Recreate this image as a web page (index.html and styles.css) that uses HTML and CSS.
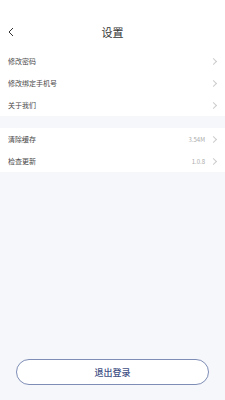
FILE: index.html
```html
<!DOCTYPE html>
<html lang="zh">

<head>
    <meta charset="UTF-8">
    <meta name="viewport" content="width=device-width, initial-scale=1.0">
    <title>设置</title>
    <link rel="stylesheet" href="styles.css">
</head>

<body>
    <div class="cabecalho">
        <span class="voltar">
            <svg width="6" height="10" viewBox="0 0 6 10">
                <path d="M5 1 L1 5 L5 9" fill="none" stroke="#333" stroke-width="1" />
            </svg>
        </span>
        <span class="titulo">设置</span>
    </div>
    <div class="grupo">
        <div class="linha">
            <span class="nome">修改密码</span>
            <span class="seta"></span>
        </div>
        <div class="linha">
            <span class="nome">修改绑定手机号</span>
            <span class="seta"></span>
        </div>
        <div class="linha">
            <span class="nome">关于我们</span>
            <span class="seta"></span>
        </div>
    </div>
    <div class="grupo">
        <div class="linha">
            <span class="nome">清除缓存</span>
            <span class="valor">3.54M</span>
            <span class="seta"></span>
        </div>
        <div class="linha">
            <span class="nome">检查更新</span>
            <span class="valor">1.0.8</span>
            <span class="seta"></span>
        </div>
    </div>
    <div class="espaco"></div>
    <div class="rodape">
        <button class="botao-sair">退出登录</button>
    </div>
</body>

</html>
```

FILE: styles.css
```css
body {
    margin: 0;
    height: 400px;
    display: flex;
    flex-direction: column;
    background-color: #f6f7fa;
    font-family: "Noto Sans CJK SC", "Noto Sans", sans-serif;
}

.cabecalho {
    position: relative;
    height: 50px;
    background-color: #fff;
    display: flex;
    align-items: center;
    justify-content: center;
    padding-top: 14px;
    box-sizing: border-box;
}

.voltar {
    position: absolute;
    left: 8px;
    top: 27px;
    display: flex;
}

.titulo {
    font-size: 11px;
    color: #333;
}

.grupo {
    background-color: #fff;
    margin-bottom: 12px;
}

.linha {
    display: flex;
    align-items: center;
    height: 22px;
    padding: 0 9px 0 8px;
}

.nome {
    flex: 1;
    font-size: 7px;
    color: #4a4a4a;
}

.valor {
    font-size: 6px;
    color: #aaa;
    margin-right: 6px;
}

.seta {
    width: 4px;
    height: 4px;
    border-top: 1px solid #ccc;
    border-right: 1px solid #ccc;
    transform: rotate(45deg);
}

.espaco {
    flex: 1;
}

.rodape {
    padding: 0 16px 15px 16px;
}

.botao-sair {
    display: block;
    width: 100%;
    height: 26px;
    border: 1px solid #7d8db5;
    border-radius: 13px;
    background-color: #fff;
    color: #3f5185;
    font-size: 9px;
    font-weight: 500;
    font-family: "Noto Sans CJK SC", "Noto Sans", sans-serif;
}
```
